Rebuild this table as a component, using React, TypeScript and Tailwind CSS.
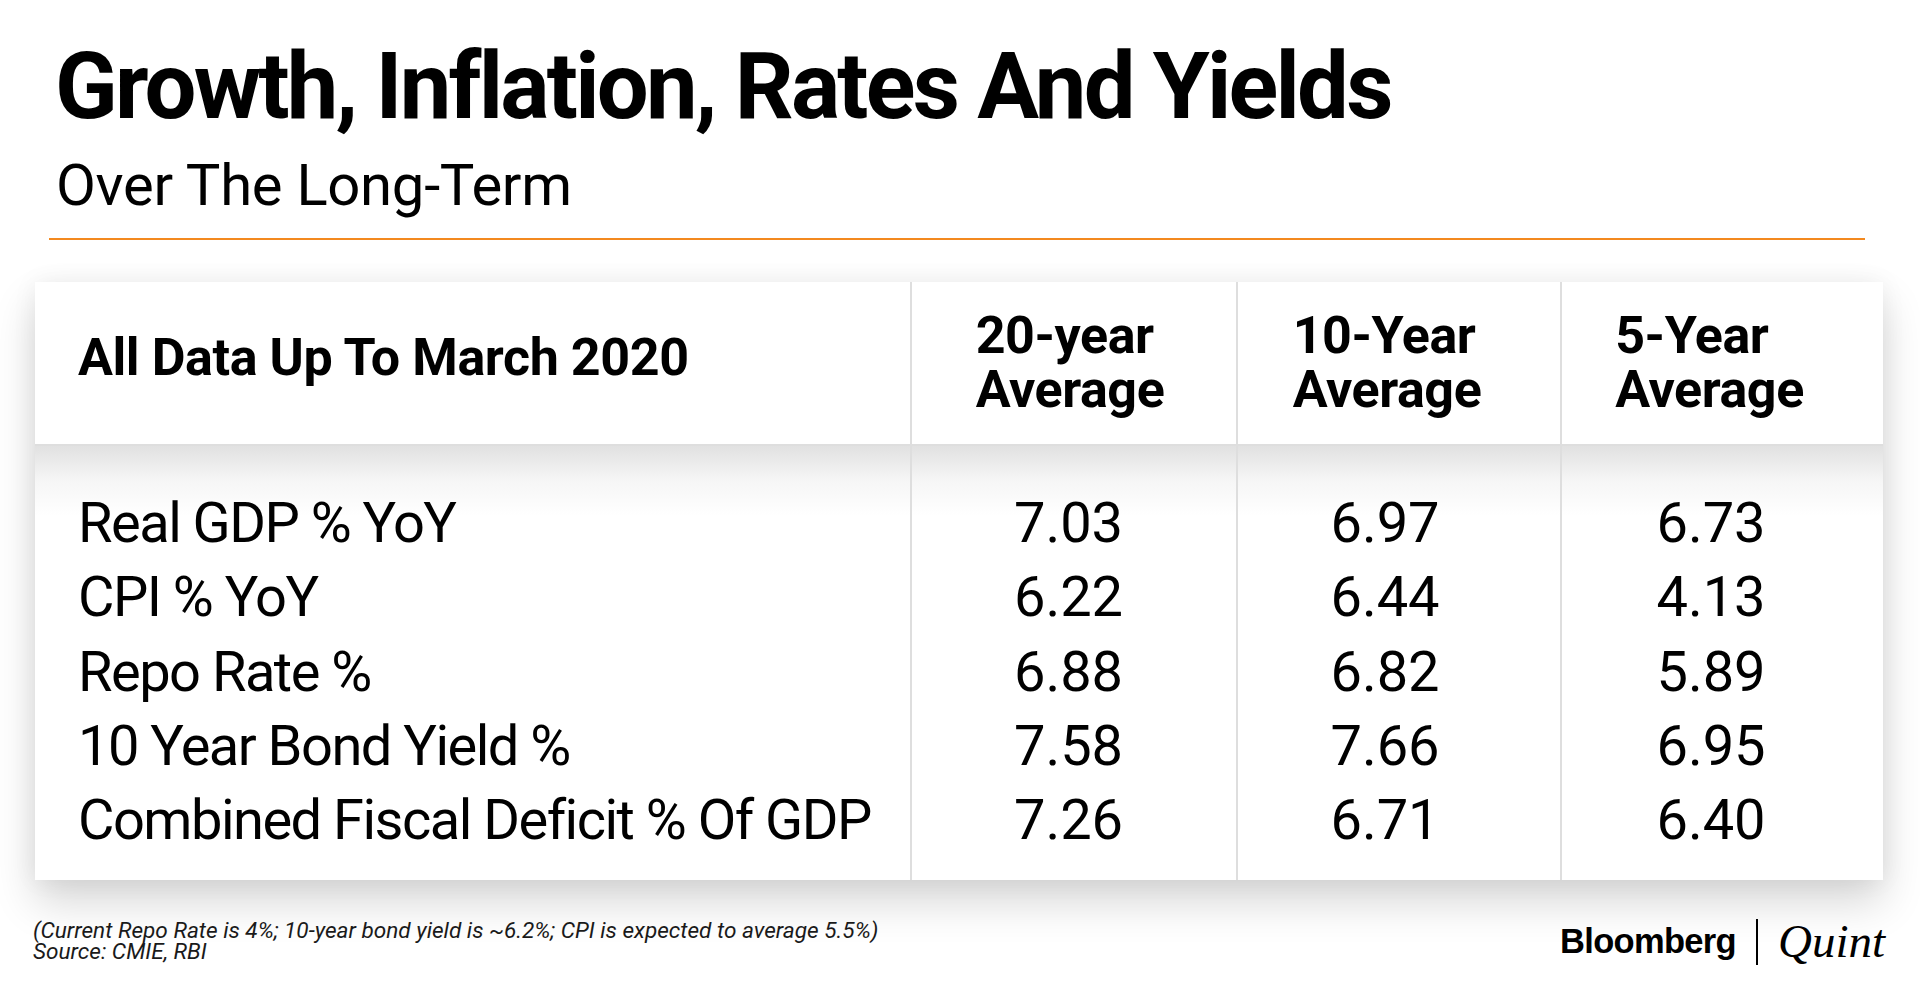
import React from "react";

const ROWS = [
  { label: "Real GDP % YoY", values: ["7.03", "6.97", "6.73"] },
  { label: "CPI % YoY", values: ["6.22", "6.44", "4.13"] },
  { label: "Repo Rate %", values: ["6.88", "6.82", "5.89"] },
  { label: "10 Year Bond Yield %", values: ["7.58", "7.66", "6.95"] },
  { label: "Combined Fiscal Deficit % Of GDP", values: ["7.26", "6.71", "6.40"] },
];

const HEADS = [
  { top: "20-year", pad: "pr-[8px]", valPad: "pr-[11px]" },
  { top: "10-Year", pad: "pr-[24px]", valPad: "pr-[28px]" },
  { top: "5-Year", pad: "pr-[26px]", valPad: "pr-[23px]" },
];

const bodyBg = "bg-[linear-gradient(to_bottom,#e1e1e1_0px,#f6f6f6_35px,#ffffff_70px)]";

export default function App() {
  return (
    <div className="w-[1920px] h-[993px] bg-white overflow-hidden text-black font-['Roboto','Liberation_Sans',sans-serif]">
      {/* title block */}
      <div className="pt-[41px] pl-[55px]">
        <h1 className="text-[92px] leading-none font-bold tracking-[-0.03em]">
          Growth, Inflation, Rates And Yields
        </h1>
        <p className="mt-[23px] pl-[1px] text-[58px] leading-none font-normal tracking-[-0.005em]">
          Over The Long-Term
        </p>
      </div>

      <div className="mt-[24px] ml-[49px] w-[1816px] h-[2px] bg-[#f3891f]" />

      {/* table */}
      <div className="mt-[42px] ml-[35px] w-[1848px] shadow-[0_22px_40px_rgba(0,0,0,0.16),0_0_24px_rgba(0,0,0,0.06)]">
        <div className="grid grid-cols-[875px_324px_322px_321px] gap-[2px] bg-[#dedede]">
          <div className="h-[162px] bg-white flex items-center pl-[43px] pb-[10px]">
            <span className="text-[52px] leading-[54px] font-bold tracking-[-0.008em]">
              All Data Up To March 2020
            </span>
          </div>
          {HEADS.map((h) => (
            <div key={h.top} className={`h-[162px] bg-white flex items-center justify-center ${h.pad}`}>
              <div className="text-[52px] leading-[54px] font-bold tracking-[-0.008em] text-left">
                <div>{h.top}</div>
                <div>Average</div>
              </div>
            </div>
          ))}

          <div className={`h-[434px] ${bodyBg} pt-[40px] pl-[43px]`}>
            {ROWS.map((r) => (
              <div key={r.label} className="text-[56px] leading-[74.3px] tracking-[-0.027em]">
                {r.label}
              </div>
            ))}
          </div>
          {HEADS.map((h, i) => (
            <div key={h.top + "v"} className={`h-[434px] ${bodyBg} pt-[40px] text-center ${h.valPad}`}>
              {ROWS.map((r) => (
                <div key={r.label} className="text-[56px] leading-[74.3px]">
                  {r.values[i]}
                </div>
              ))}
            </div>
          ))}
        </div>
      </div>

      {/* footer */}
      <div className="mt-[40px] px-[33px] flex items-start justify-between">
        <div className="text-[22.6px] leading-[21px] italic text-[#1a1a1a]">
          <div>(Current Repo Rate is 4%; 10-year bond yield is ~6.2%; CPI is expected to average 5.5%)</div>
          <div>Source: CMIE, RBI</div>
        </div>
        <div className="flex items-center gap-[20px] -mt-[2px]">
          <span className="font-['Liberation_Sans',Arial,sans-serif] font-bold text-[34.5px] tracking-[-0.02em] leading-none">
            Bloomberg
          </span>
          <span className="w-[2px] h-[46px] bg-black" />
          <span className="font-['Liberation_Serif','Times_New_Roman',serif] italic text-[47px] leading-none pr-[2px]">
            Quint
          </span>
        </div>
      </div>
    </div>
  );
}
